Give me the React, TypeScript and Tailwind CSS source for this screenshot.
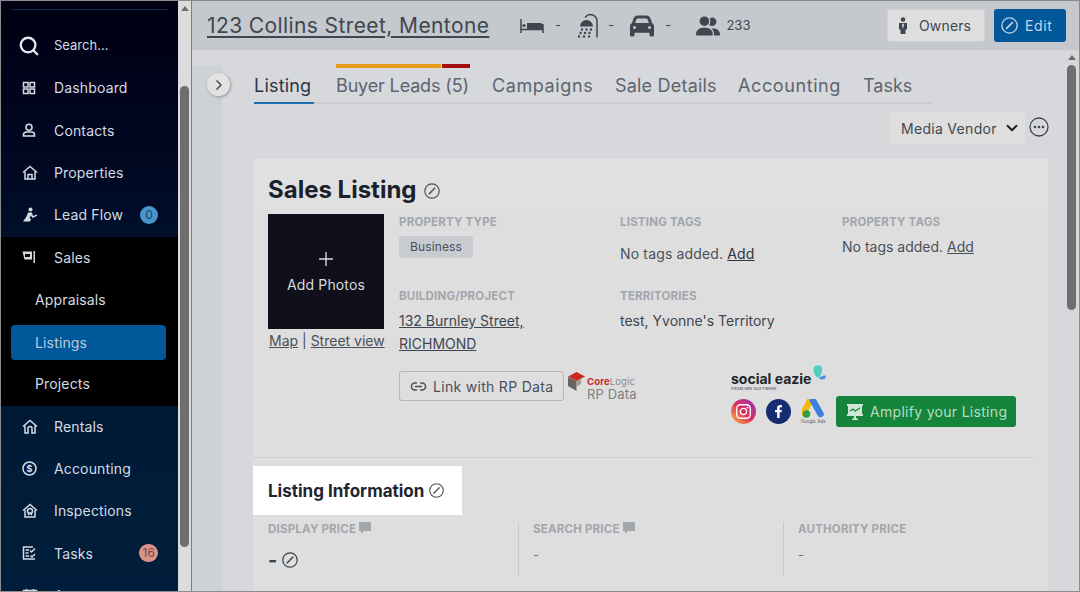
import { ChevronDown, ChevronRight, Link2, Plus, Search } from 'lucide-react';
import { FaFacebookF, FaInstagram } from 'react-icons/fa';
import { FaCar, FaUserGroup } from 'react-icons/fa6';

// Small drawn icons for the sidebar
const DashIcon = () => (
  <svg width="14" height="14" viewBox="0 0 14 14" fill="none" stroke="currentColor" strokeWidth="1.500">
    <rect x="1.500" y="1.500" width="4.500" height="4.500" />
    <rect x="8" y="1.500" width="4.500" height="4.500" />
    <rect x="1.500" y="8" width="4.500" height="4.500" />
    <rect x="8" y="8" width="4.500" height="4.500" />
  </svg>
);
const ContactIcon = () => (
  <svg width="14" height="14" viewBox="0 0 14 14" fill="none" stroke="currentColor" strokeWidth="1.600">
    <circle cx="7" cy="4.200" r="3" />
    <path d="M1.500 13v-1.200c0-1.800 1.600-2.800 3-2.800h5c1.400 0 3 1 3 2.800V13z" />
  </svg>
);
const HomeIcon = () => (
  <svg width="16" height="15" viewBox="0 0 16 15" fill="none" stroke="currentColor" strokeWidth="1.500">
    <path d="M1 7.500 8 1.500l7 6" />
    <path d="M3 6.500V14h10V6.500" />
    <path d="M6 14V9.500h4V14" />
  </svg>
);
const LeadIcon = () => (
  <svg width="16" height="15" viewBox="0 0 16 15" fill="currentColor">
    <circle cx="8.500" cy="2.500" r="2" />
    <path d="M6 5.500h4l1 3.500 3.500-1.500.6 1.200L10.500 11 9 8.500 7.500 11l1.500 1-1 2.500H1l3.500-5z" />
  </svg>
);
const SalesIcon = () => (
  <svg width="14" height="14" viewBox="0 0 14 14" fill="none">
    <path d="M.5 1.500h9.500v8H2.500z" fill="currentColor" />
    <rect x="3" y="4" width="5" height="3" fill="#000" />
    <rect x="11.500" y="1" width="1.500" height="12" fill="currentColor" />
  </svg>
);
const RentalIcon = () => (
  <svg width="16" height="15" viewBox="0 0 16 15" fill="none" stroke="currentColor" strokeWidth="1.500">
    <path d="M1 7.500 8 1.500l7 6" />
    <path d="M3 6.500V14h3V9.500a2 2 0 0 1 4 0V14h3V6.500" />
  </svg>
);
const DollarIcon = () => (
  <svg width="15" height="15" viewBox="0 0 15 15" fill="none" stroke="currentColor" strokeWidth="1.500">
    <circle cx="7.500" cy="7.500" r="6.500" />
    <text x="7.500" y="11" textAnchor="middle" fontSize="9.500" fontWeight="700" fill="currentColor" stroke="none" fontFamily="Inter, sans-serif">
      $
    </text>
  </svg>
);
const InspectIcon = () => (
  <svg width="16" height="15" viewBox="0 0 16 15" fill="none" stroke="currentColor" strokeWidth="1.500">
    <path d="M1 7.500 8 1.500l7 6" />
    <path d="M3 7v7h10V7" />
    <circle cx="8" cy="8" r="2.500" />
    <path d="m6 12 2-2 2 2" />
  </svg>
);
const TaskIcon = () => (
  <svg width="14" height="14" viewBox="0 0 14 14" fill="none" stroke="currentColor" strokeWidth="1.500">
    <path d="M11 1H1.500v12H13" />
    <path d="M3.500 4H7M3.500 7H6.500M3.500 10H7" />
    <path d="m8 4.500 1.500 1.500L13 2.500M8.500 9.500 10 11l3-3" />
  </svg>
);
const CalendarIcon = () => (
  <svg width="16" height="15" viewBox="0 0 16 15" fill="none" stroke="currentColor" strokeWidth="1.500">
    <rect x="1.500" y="2.500" width="13" height="12" />
    <path d="M4.500 1v3M11.500 1v3" />
  </svg>
);

function EditIcon({ size = 16, className = '' }: { size?: number; className?: string }) {
  return (
    <svg width={size} height={size} viewBox="0 0 16 16" fill="none" stroke="currentColor" strokeWidth="1.200" className={className}>
      <circle cx="8" cy="8" r="7.200" />
      <path d="M4.800 11.200 11.200 4.800" strokeWidth="1.500" />
    </svg>
  );
}

function NavItem({ icon, label, badge, badgeClass }: { icon: React.ReactNode; label: string; badge?: string; badgeClass?: string }) {
  return (
    <div className="h-[42.3px] flex items-center pb-[2px] pl-[21px] text-[#d5dbe3] shrink-0">
      <span className="w-[32px] flex items-center">{icon}</span>
      <span className="text-[14px]">{label}</span>
      {badge && (
        <span className={`ml-auto mr-[20px] h-[18px] min-w-[18px] px-[3px] rounded-full text-[12px] flex items-center justify-center ${badgeClass}`}>
          {badge}
        </span>
      )}
    </div>
  );
}

function Sidebar() {
  return (
    <aside className="w-[177px] shrink-0 flex flex-col overflow-hidden">
      <div className="bg-gradient-to-b from-[#000012] to-[#000f2a] h-[236px] shrink-0 flex flex-col">
        <div className="h-px bg-[#0a2a4a] mx-[10px] mt-[8px]" />
        <div className="h-[42.3px] mt-[15.500px] flex items-center pb-[2px] pl-[17px] text-[#e6eaee] shrink-0">
          <Search size={22} strokeWidth={2.500} className="mr-[14px]" />
          <span className="text-[13px] tracking-normal text-[#d5dbe3]">Search...</span>
        </div>
        <NavItem icon={<DashIcon />} label="Dashboard" />
        <NavItem icon={<ContactIcon />} label="Contacts" />
        <NavItem icon={<HomeIcon />} label="Properties" />
        <NavItem icon={<LeadIcon />} label="Lead Flow" badge="0" badgeClass="bg-[#4a94cc] text-[#15466e]" />
      </div>
      <div className="bg-black h-[169px] shrink-0 flex flex-col">
        <NavItem icon={<SalesIcon />} label="Sales" />
        <div className="h-[42.3px] flex items-center pb-[2px] pl-[34px] text-[14px] text-[#d5dbe3] shrink-0">Appraisals</div>
        <div className="h-[35px] my-[3.600px] ml-[10px] mr-[12px] pl-[24px] pb-[1px] rounded-[4px] bg-[#00579a] flex items-center text-[14px] text-[#b9cbdc] shrink-0">Listings</div>
        <div className="h-[42.3px] flex items-center pb-[2px] pl-[34px] text-[14px] text-[#d5dbe3] shrink-0">Projects</div>
      </div>
      <div className="bg-gradient-to-b from-[#001a36] to-[#001f3c] flex-1 flex flex-col">
        <NavItem icon={<RentalIcon />} label="Rentals" />
        <NavItem icon={<DollarIcon />} label="Accounting" />
        <NavItem icon={<InspectIcon />} label="Inspections" />
        <NavItem icon={<TaskIcon />} label="Tasks" badge="16" badgeClass="bg-[#d9938a] text-[#7a4a45]" />
        <NavItem icon={<CalendarIcon />} label="Agents" />
      </div>
    </aside>
  );
}

function Scrollbar({ thumbTop, thumbHeight, className }: { thumbTop: string; thumbHeight: string; className: string }) {
  return (
    <div className={`w-[13px] shrink-0 flex flex-col items-center ${className}`}>
      <div className="mt-[5px] w-0 h-0 border-x-[4px] border-x-transparent border-b-[5px] border-b-[#6e6e6e]" />
      <div className={`w-[9px] rounded-full bg-[#6e6e6e] ${thumbTop} ${thumbHeight}`} />
    </div>
  );
}

function Label({ children }: { children: React.ReactNode }) {
  return <div className="text-[11.5px] font-bold text-[#a2a6ad] leading-[14px] uppercase tracking-[0.2px] whitespace-nowrap">{children}</div>;
}

function NoteIcon() {
  return (
    <svg width="12" height="12" viewBox="0 0 12 12" fill="#a2a6ad" className="-mt-[2px]">
      <path d="M0 0h12v9H5l-3 3V9H0z" />
    </svg>
  );
}

function Header() {
  return (
    <header className="h-[49px] shrink-0 bg-[#c5c8cc] flex items-center pl-[15px] pr-[13px] text-[#3f4650]">
      <h1 className="text-[21px] underline underline-offset-[3px] tracking-[0.4px] w-[282px] whitespace-nowrap">123 Collins Street, Mentone</h1>
      <svg width="24" height="14" viewBox="0 0 24 14" fill="none" stroke="currentColor" strokeWidth="1.500" className="ml-[31px]">
        <path d="M1 0v14M23 5v9M1 10.500h22" />
        <path d="M7 4h13a3 3 0 0 1 3 3v3H7z" fill="currentColor" stroke="none" />
        <circle cx="4" cy="6.500" r="1.600" fill="currentColor" stroke="none" />
      </svg>
      <span className="ml-[11px] text-[13px]">-</span>
      <svg width="22" height="25" viewBox="0 0 22 25" fill="none" stroke="currentColor" strokeWidth="1.500" strokeLinecap="round" className="ml-[16px]">
        <path d="M20 24V8a6.500 6.500 0 0 0-11.500-4" />
        <path d="M3 13.500a6.500 6.500 0 0 1 13 0z" fill="currentColor" stroke="none" />
        <path d="M5 16.500h.01M9.500 16.500h.01M14 16.500h.01M3.500 20h.01M8 20h.01M12.500 20h.01M2 23.500h.01M7 23.500h.01M12 23.500h.01" strokeWidth="2.400" />
      </svg>
      <span className="ml-[9px] text-[13px]">-</span>
      <FaCar size={24} className="ml-[16px] text-[#3f4650]" />
      <span className="ml-[11px] text-[13px]">-</span>
      <FaUserGroup size={24} className="ml-[25px] text-[#3f4650]" />
      <span className="ml-[6px] text-[13px] tracking-normal">233</span>
      <button className="ml-auto h-[33px] w-[98px] rounded-[3px] bg-[#dedede] border border-[#d0d0d0] flex items-center pl-[10px] text-[14px]">
        <svg width="10" height="17" viewBox="0 0 10 17" fill="currentColor" className="mr-[11px]">
          <circle cx="5" cy="2.500" r="2.300" />
          <path d="M1 6h8v6.500H7.500V17h-5v-4.500H1z" />
          <path d="M5 6 4 8l1 4 1-4z" fill="#dedede" />
        </svg>
        Owners
      </button>
      <button className="ml-[9px] h-[33px] w-[72px] rounded-[3px] bg-[#00579a] flex items-center pl-[7px] text-[14px] tracking-[0.6px] text-[#c6d5e3]">
        <EditIcon size={17} className="mr-[7px]" />
        Edit
      </button>
    </header>
  );
}

function Tabs() {
  return (
    <nav className="relative ml-[1px] w-[679px] h-[39px] border-b-2 border-[#c9cbcf] flex text-[18px] text-[#5c6470] whitespace-nowrap">
      <div className="w-[60px] -mb-[2px] border-b-2 border-[#1f6fa8] text-[#2c3444] pt-[7px] tracking-[0.2px]">Listing</div>
      <div className="relative ml-[22px] pt-[7px] w-[134px] tracking-[-0.15px]">
        <div className="absolute -top-[1px] left-0 w-full flex gap-px h-[4px]">
          <span className="w-[105px] bg-[#e39a18]" />
          <span className="flex-1 bg-[#a20d0d]" />
        </div>
        Buyer Leads (5)
      </div>
      <div className="ml-[22px] pt-[7px] w-[101px] tracking-[0.6px]">Campaigns</div>
      <div className="ml-[22px] pt-[7px] w-[101px] tracking-[0.2px]">Sale Details</div>
      <div className="ml-[22px] pt-[7px] w-[103px] tracking-[0.6px]">Accounting</div>
      <div className="ml-[22px] pt-[7px] tracking-normal">Tasks</div>
    </nav>
  );
}

function SalesCard() {
  return (
    <section className="mt-[15px] mr-[17px] bg-[#dedede] flex-1 min-h-0">
      <div className="h-[55px] pl-[15px] flex items-center gap-[7px] bg-[#e0e0e0]">
        <h2 className="text-[24px] font-bold text-[#1a1f2b] mt-[6px] tracking-normal">Sales Listing</h2>
        <EditIcon size={16} className="text-[#4a505a] mt-[8px]" />
      </div>
      <div className="pl-[15px] flex gap-[15px] h-[244px] border-b border-[#ccced1] mr-[14px]">
        <div className="w-[116px] shrink-0">
          <div className="h-[115px] bg-[#10101c] flex flex-col items-center justify-center text-[#d8dadd]">
            <Plus size={22} strokeWidth={1.500} />
            <span className="text-[14px] mt-[4px]">Add Photos</span>
          </div>
          <div className="mt-[1px] text-[14px] tracking-normal text-[#4a505a] whitespace-nowrap pl-px">
            <span className="underline">Map</span> | <span className="underline">Street view</span>
          </div>
        </div>
        <div className="flex-1">
          <div className="grid grid-cols-[221px_222px_1fr] pt-[1px] h-[74px]">
            <div>
              <Label>Property Type</Label>
              <span className="mt-[7px] inline-block h-[22px] leading-[22px] w-[74px] text-center rounded-[3px] bg-[#c8cbd0] text-[12px] text-[#4a505a]">Business</span>
            </div>
            <div>
              <Label>Listing Tags</Label>
              <div className="mt-[14px] text-[14px] text-[#4a505a]">No tags added. <span className="underline text-[#2c3444]">Add</span></div>
            </div>
            <div>
              <Label>Property Tags</Label>
              <div className="mt-[7px] text-[14px] tracking-normal text-[#4a505a]">No tags added. <span className="underline">Add</span></div>
            </div>
          </div>
          <div className="grid grid-cols-[221px_222px_1fr] h-[77px] pt-[1px]">
            <div>
              <Label>Building/Project</Label>
              <div className="mt-[6px] text-[14px] tracking-normal leading-[23px] text-[#3f4650] underline">132 Burnley Street,<br />RICHMOND</div>
            </div>
            <div>
              <Label>Territories</Label>
              <div className="mt-[6px] text-[14px] tracking-normal leading-[23px] text-[#3f4650]">test, Yvonne's Territory</div>
            </div>
          </div>
          <div className="flex">
            <button className="h-[30px] w-[165px] mt-[6px] rounded-[3px] border border-[#b4b6ba] text-[14px] tracking-[0.3px] text-[#4a505a] flex items-center pl-[10px] gap-[6px] whitespace-nowrap">
              <Link2 size={17} strokeWidth={2.200} />
              Link with RP Data
            </button>
            <div className="ml-[4px] mt-[7px] w-[163px] shrink-0 relative h-[30px]">
              <svg width="17" height="19" viewBox="0 0 17 19" className="absolute left-0 top-0">
                <path d="M8.500 0 17 4.500 8.500 9 0 4.500z" fill="#c8281e" />
                <path d="M0 5v9l8.500 5V9z" fill="#6a645c" />
                <path d="M8.500 9 13 7v5l-4.500 2.500z" fill="#a39c92" />
              </svg>
              <span className="absolute left-[19px] top-[3px] text-[9.500px] font-bold text-[#c8281e] whitespace-nowrap">Core<span className="font-normal text-[#8a8a8a]">Logic</span></span>
              <span className="absolute left-[19px] top-[13px] text-[13px] text-[#7f7f7f] whitespace-nowrap">RP Data</span>
            </div>
            <div className="flex flex-col shrink-0">
              <div className="relative h-[24px] w-[100px]">
                <span className="absolute left-0 top-[6px] text-[14px] leading-[16px] font-bold text-[#23252b] tracking-normal whitespace-nowrap">social eazie</span>
                <span className="absolute left-0 top-[22px] text-[4px] leading-[4px] text-[#2a3a55] whitespace-nowrap">FROM MRI SOFTWARE</span>
                <svg width="20" height="20" viewBox="0 0 20 20" className="absolute left-[78px] top-0">
                  <path d="M6 1c5-2 8 1 7 5s-2 6-4 7C5 11 3 4 6 1z" fill="#4fd0bd" />
                  <path d="M10 13c2-2 5-3 7-2 0 3-4 5-7 2z" fill="#4a94e0" />
                </svg>
              </div>
              <div className="flex items-center mt-[7px]">
                <span className="w-[25px] h-[25px] rounded-full bg-gradient-to-tr from-[#f5b300] via-[#e0245e] to-[#8a2bb8] flex items-center justify-center text-white">
                  <FaInstagram size={17} />
                </span>
                <span className="ml-[10px] w-[25px] h-[25px] rounded-full bg-[#152c70] flex items-center justify-center text-white">
                  <FaFacebookF size={13} />
                </span>
                <div className="ml-[10px] w-[24px] flex flex-col items-center">
                  <svg width="22" height="20" viewBox="0 0 22 20">
                    <path d="M8 1.500 1.500 14" stroke="#f2b705" strokeWidth="6" strokeLinecap="round" />
                    <path d="M11 1.500 18.500 15" stroke="#3f7fe0" strokeWidth="6.500" strokeLinecap="round" />
                    <circle cx="4.500" cy="15" r="3.800" fill="#2f9e44" />
                  </svg>
                  <span className="text-[4.500px] leading-[6px] text-[#555] whitespace-nowrap tracking-normal">Google Ads</span>
                </div>
                <button className="ml-[11px] h-[31px] w-[180px] rounded-[3px] bg-[#14853a] text-[#b8ddc4] text-[14px] tracking-[0.3px] flex items-center pl-[11px] gap-[7px] whitespace-nowrap">
                  <svg width="16" height="17" viewBox="0 0 16 17" fill="#cde6d5">
                    <path d="M0 1h16v2h-1v8h1v2H9v2l2 1v1H5v-1l2-1v-2H0v-2h1V3H0z" />
                    <path d="m3 8 3-2 2 2 5-3" fill="none" stroke="#14853a" strokeWidth="1.200" />
                  </svg>
                  Amplify your Listing
                </button>
              </div>
            </div>
          </div>
        </div>
      </div>
      <div className="relative h-[64px]">
        {/* highlighted section, sits over the dimmed page */}
        <div className="absolute left-0 top-[8px] w-[209px] h-[49px] bg-white pl-[15px] pt-[2px] flex items-center gap-[5px]">
          <h3 className="text-[17px] font-bold text-[#1f2430] whitespace-nowrap tracking-normal">Listing Information</h3>
          <EditIcon size={15} className="text-[#4a505a] -mt-[2px]" />
        </div>
      </div>
      <div className="grid grid-cols-[251px_265px_1fr] pl-[15px]">
        <div className="h-[55px] border-r border-[#c6c8cb]">
          <div className="flex items-center gap-[3px]">
            <Label>Display Price</Label>
            <NoteIcon />
          </div>
          <div className="mt-[13px] flex items-center gap-[4px] text-[#3a404a]">
            <span className="text-[20px] font-bold leading-[22px]">-</span>
            <EditIcon size={16} />
          </div>
        </div>
        <div className="h-[55px] pl-[14px] border-r border-[#c6c8cb]">
          <div className="flex items-center gap-[3px]">
            <Label>Search Price</Label>
            <NoteIcon />
          </div>
          <div className="mt-[10px] text-[13px] text-[#70757d]">-</div>
        </div>
        <div className="h-[55px] pl-[14px]">
          <Label>Authority Price</Label>
          <div className="mt-[10px] text-[13px] text-[#70757d]">-</div>
        </div>
      </div>
    </section>
  );
}

export default function App() {
  return (
    <div className="w-[1080px] h-[592px] border border-[#8c8c8c] flex overflow-hidden bg-[#d7d8db] [font-family:Inter,'Noto_Sans',sans-serif] tracking-[0.15px] box-border">
      <Sidebar />
      <Scrollbar className="bg-[#dcdcdc] border-r border-[#7d7d7d] w-[14px]" thumbTop="mt-[75px]" thumbHeight="h-[461px]" />
      <main className="flex-1 min-w-0 flex flex-col">
        <Header />
        <div className="flex-1 min-h-0 flex">
          <div className="relative w-[30px] shrink-0 mt-[15px] bg-[#cfd2d5]">
            <button className="absolute left-[15px] top-[8px] w-[23px] h-[23px] rounded-full bg-[#e2e2e2] shadow-[1px_1px_3px_rgba(0,0,0,0.3)] flex items-center justify-center text-[#4a505a]">
              <ChevronRight size={16} strokeWidth={2.500} />
            </button>
          </div>
          <div className="flex-1 min-w-0 pl-[31px] flex flex-col overflow-hidden">
            <div className="mt-[15px]">
              <Tabs />
            </div>
            <div className="h-[32px] mt-[8px] mr-[16px] flex items-start justify-end">
              <div className="h-[32px] w-[135px] rounded-[3px] bg-[#dedede] flex items-center pl-[11px] gap-[6px] text-[14px] tracking-[0.3px] text-[#3f4650] whitespace-nowrap">
                Media Vendor <ChevronDown size={18} strokeWidth={2.500} className="text-[#1a1f2b]" />
              </div>
              <svg width="20" height="20" viewBox="0 0 20 20" fill="none" stroke="#3f4650" strokeWidth="1.300" className="ml-[4px] mt-[5px]">
                <circle cx="10" cy="10" r="9" />
                <circle cx="6" cy="10" r="1.300" fill="#3f4650" stroke="none" />
                <circle cx="10" cy="10" r="1.300" fill="#3f4650" stroke="none" />
                <circle cx="14" cy="10" r="1.300" fill="#3f4650" stroke="none" />
              </svg>
            </div>
            <SalesCard />
          </div>
          <Scrollbar className="bg-[#d7d8db] mr-px" thumbTop="mt-[5px]" thumbHeight="h-[245px]" />
        </div>
      </main>
    </div>
  );
}
